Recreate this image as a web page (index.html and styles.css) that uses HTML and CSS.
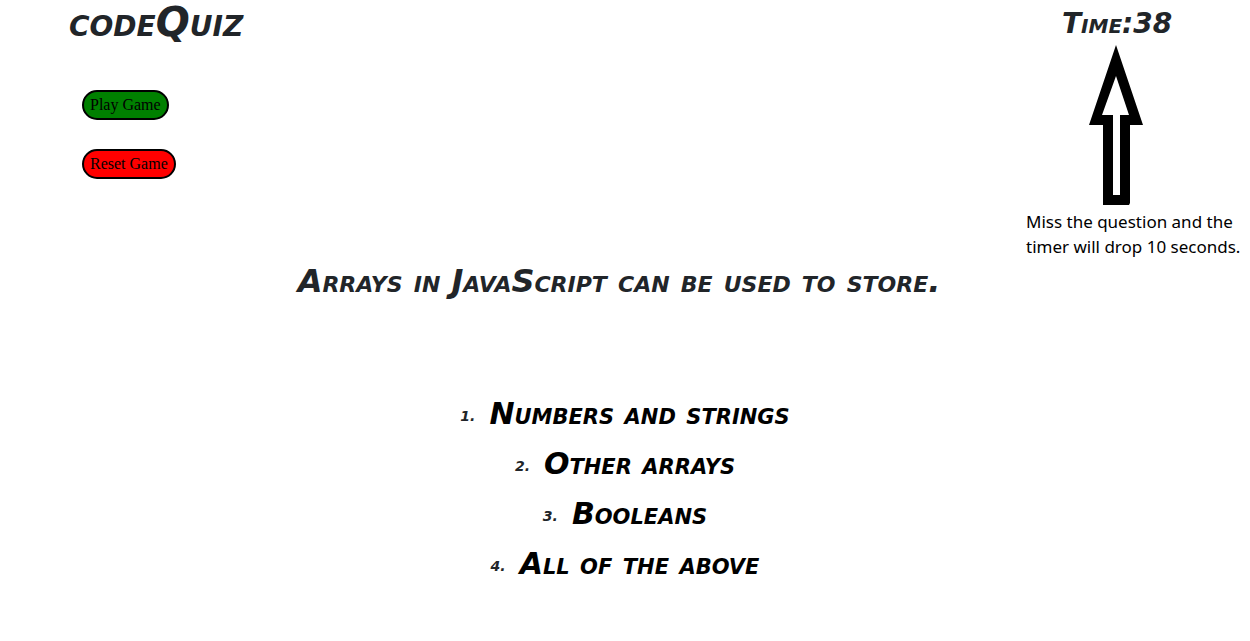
FILE: index.html
```html
<!DOCTYPE html>
<html lang="en">
<head>
<meta charset="utf-8">
<meta name="viewport" content="width=device-width, initial-scale=1">
<title>codeQuiz</title>
<link rel="stylesheet" href="styles.css">
</head>
<body>
<header class="top">
  <div class="intro">
    <h1 class="title marker">codeQuiz</h1>
    <div class="controls">
      <button class="btn play" type="button">Play Game</button>
      <button class="btn reset" type="button">Reset Game</button>
    </div>
  </div>
  <aside class="status">
    <h2 class="timer marker">Time:38</h2>
    <svg class="arrow" viewBox="0 0 54 160" width="54" height="160" aria-hidden="true">
      <path fill="#000" fill-rule="evenodd" d="M27 0 54 80H41V158L40 160H14V80H0ZM27 31 13 70H24V150H31V70H40Z"/>
    </svg>
    <p class="note">Miss the question and the<br>timer will drop 10 seconds.</p>
  </aside>
</header>
<main class="quiz">
  <h2 class="question marker">Arrays in JavaScript can be used to store.</h2>
  <ol class="answers marker">
    <li><span class="number">1.</span><button class="answer" type="button">Numbers and strings</button></li>
    <li><span class="number">2.</span><button class="answer" type="button">Other arrays</button></li>
    <li><span class="number">3.</span><button class="answer" type="button">Booleans</button></li>
    <li><span class="number">4.</span><button class="answer" type="button">All of the above</button></li>
  </ol>
</main>
</body>
</html>
```
FILE: styles.css
```css
* { box-sizing: border-box; }
body {
  margin: 0;
  background: #fff;
  color: #212529;
  font-family: "Noto Sans", sans-serif;
}
h1, h2, p, ol { margin: 0; padding: 0; }
.marker {
  font-family: "Permanent Marker", "DejaVu Sans", sans-serif;
  font-weight: 700;
  font-style: italic;
  font-variant-caps: small-caps;
}
.top {
  display: flex;
  justify-content: space-between;
  align-items: flex-start;
}
.intro { padding-left: 69px; }
.title { font-size: 40px; line-height: 44px; }
.controls {
  display: flex;
  flex-direction: column;
  align-items: flex-start;
  gap: 29px;
  padding: 46px 0 0 13px;
}
.btn {
  height: 30px;
  padding: 0 6px;
  border: 2px solid #000;
  border-radius: 15px;
  color: #000;
  font: 16px "Liberation Serif", serif;
}
.play { background: #008000; }
.reset { background: #f00; }
.status { width: 224px; }
.timer {
  padding: 4px 0 0 36px;
  font-size: 28px;
  line-height: 40px;
}
.arrow { display: block; margin: 1px 0 4px 63px; }
.note {
  color: #000;
  font-size: 17px;
  line-height: 25px;
  white-space: nowrap;
}
.quiz { text-align: center; }
.question { padding-right: 12px; font-size: 32px; line-height: 44px; }
.answers {
  display: flex;
  flex-direction: column;
  align-items: center;
  padding-top: 86px;
  list-style: none;
}
.answers li {
  display: flex;
  align-items: center;
  gap: 14px;
  height: 50px;
}
.number { padding-top: 4px; font-size: 14px; }
.answer {
  padding: 0;
  border: 0;
  background: none;
  color: #000;
  font: inherit;
  font-size: 30px;
  line-height: 50px;
}
```
